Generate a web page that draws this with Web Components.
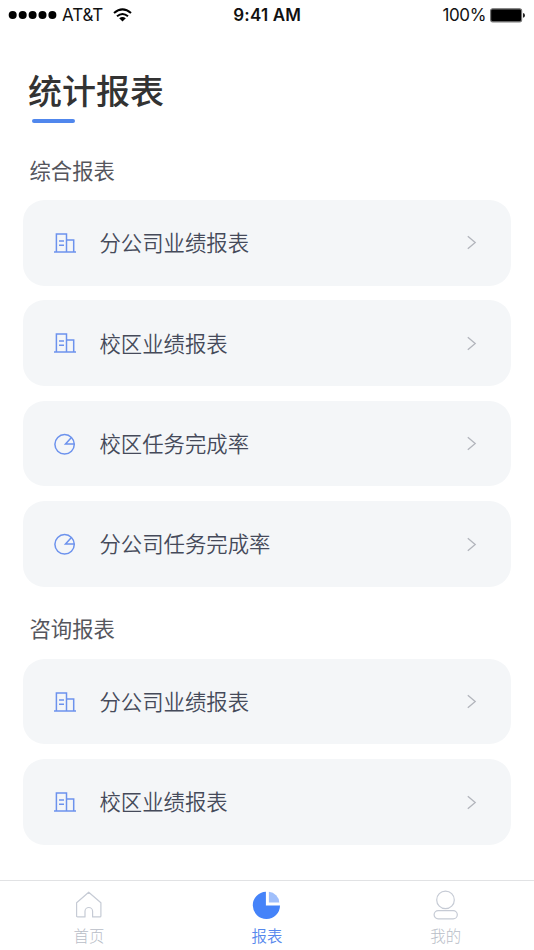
<!DOCTYPE html>
<html lang="zh-CN">
<head>
<meta charset="utf-8">
<title>统计报表</title>
<style>
html,body{margin:0;height:100%;background:#fff}
body{font-family:"Noto Sans CJK SC",sans-serif}
</style>
</head>
<body>
<report-app></report-app>
<script>
const define = (name, html) => customElements.define(name, class extends HTMLElement {
  constructor() {
    super();
    const t = document.createElement('template');
    t.innerHTML = html;
    this.attachShadow({mode: 'open'}).append(t.content.cloneNode(true));
  }
});

define('status-bar', `
<style>
:host{display:grid;grid-template-columns:1fr auto 1fr;align-items:center;height:30px;padding:0 9px 0 8px;box-sizing:border-box;font:17px/30px Inter,sans-serif;color:#111}
div{display:flex;align-items:center}
svg{display:block}
.carrier{margin-left:5px;font-size:17px;letter-spacing:-.1px}
.wifi{margin-left:9.5px}
.time{font-weight:600;font-size:17px;letter-spacing:.2px;padding-left:1.5px}
.right{justify-content:flex-end;gap:4px}
.pct{font-size:17px;letter-spacing:-.4px}
</style>
<div><svg width="49" height="10" viewBox="0 0 49 10"><circle cx="4.7" cy="5" r="4"/><circle cx="14.7" cy="5" r="4"/><circle cx="24.6" cy="5" r="4"/><circle cx="34.5" cy="5" r="4"/><circle cx="44.4" cy="5" r="4"/></svg>
<span class="carrier">AT&amp;T</span>
<svg class="wifi" width="19" height="14" viewBox="0 0 19 14" fill="none" stroke="#000" stroke-width="2"><path d="M1 5.1Q9.5-2.4 18 5.1M4 8.3q5.5-4.7 11 0"/><path d="M6.2 10.3q3.3-2.6 6.6 0L9.5 13.5z" fill="#000" stroke="none"/></svg></div>
<span class="time">9:41 AM</span>
<div class="right"><span class="pct">100%</span>
<svg width="35" height="15" viewBox="0 0 35 15"><rect x=".6" y=".8" width="31" height="13" rx="2" fill="#000" stroke="#777" stroke-width="1.2"/><path d="M33 5q2 .4 2 2.4t-2 2.4z" fill="#222"/></svg></div>`);

define('page-title', `
<style>
:host{display:block;height:93px;padding:39px 0 0 28px;box-sizing:border-box;color:#333}
h1{margin:0;font-size:34px;line-height:42px;height:50px;font-weight:500}
i{display:block;width:43px;height:4px;margin-left:4px;border-radius:2px;background:#5087ed}
</style><h1><slot></slot></h1><i></i>`);

define('report-group', `
<style>
:host{display:block}
h2{margin:0;padding-left:6.5px;font-size:21.36px;line-height:28px;font-weight:400;color:#55565d;margin-bottom:16.5px}
div{display:flex;flex-direction:column;gap:14.95px}
</style><h2><slot name="title"></slot></h2><div><slot></slot></div>`);

define('report-row', `
<style>
:host{display:flex;align-items:center;height:85.5px;border-radius:21.4px;background:#f4f6f8;color:#454a5a;font-size:21.36px;font-weight:350;line-height:32px;padding:0 34px 0 31px;box-sizing:border-box}
span{flex:1;margin-left:23.5px;padding-bottom:1.2px}
.arrow{width:11px;height:15px;fill:none;stroke:#b2b5bc;stroke-width:1.3}
</style><slot name="icon"></slot><span><slot></slot></span>
<svg class="arrow" viewBox="0 0 11 15"><path d="M1.8 1.3 9.2 7.5 1.8 13.7"/></svg>`);

const blue = 'fill="none" stroke="#6c92ed" stroke-width="1.5"';
define('building-icon', `
<style>:host{display:block;width:22px;height:22px}svg{display:block}</style>
<svg width="22" height="22" viewBox="0 0 22 22" ${blue}><path d="M0 19.9h22M2.4 20V2H12.5V20M12.5 8h7.2v12M5 8.9h5M5 13.3h5"/></svg>`);
define('ratio-icon', `
<style>:host{display:block;width:22px;height:22px}svg{display:block}</style>
<svg width="22" height="22" viewBox="0 0 22 22" ${blue}><circle cx="10.6" cy="11.3" r="9.7"/><path d="M17.4 4.4 11.5 10.9h8.7"/></svg>`);

define('home-icon', `<style>:host,svg{display:block}</style>
<svg width="30" height="30" viewBox="0 0 30 30" fill="none" stroke="#c6cbd5" stroke-width="1.2"><path d="M2.6 12.7 14.7 2.2 26.9 12.7V25.9q0 1-1 1H18.6V21.3a3.8 3.8 0 0 0-7.6 0V26.9H3.6q-1 0-1-1z" stroke-linejoin="round"/></svg>`);
define('pie-icon', `<style>:host,svg{display:block}</style>
<svg width="30" height="30" viewBox="0 0 30 30"><path d="M13.9 1.8A13.6 13.6 0 1 0 28 15.4H13.9z" fill="#4583f9"/><path d="M16.9 1.8A11.2 11.2 0 0 1 27.3 12.4H16.9z" fill="#a0bffb"/></svg>`);
define('person-icon', `<style>:host,svg{display:block}</style>
<svg width="30" height="30" viewBox="0 0 30 30" fill="none" stroke="#c6cbd5" stroke-width="1.2"><circle cx="15.5" cy="9.9" r="8.8"/><rect x="4.1" y="20.6" width="23.2" height="8.2" rx="4.1"/></svg>`);

define('tab-item', `
<style>
:host{display:flex;flex:1;flex-direction:column;align-items:center;padding-top:9px;font-size:15.4px;line-height:22px;color:#b8bdc7;font-weight:300}
:host([active]){color:#5688ed;font-weight:350}
:host(:last-child) span{padding-left:1.5px}
span{margin-top:4px}
</style><slot name="icon"></slot><span><slot></slot></span>`);
define('tab-bar', `<style>:host{display:flex;height:70px;box-sizing:border-box;border-top:1px solid #e1e2e4;background:#fff}</style><slot></slot>`);

const row = (icon, text) => `<report-row><${icon}-icon slot="icon"></${icon}-icon>${text}</report-row>`;
define('report-app', `
<style>
:host{display:flex;flex-direction:column;width:534px;height:950px;overflow:hidden;background:#fff}
main{flex:1;padding:32.5px 23px 0;display:flex;flex-direction:column;gap:27.5px}
</style>
<status-bar></status-bar><page-title>统计报表</page-title>
<main>
<report-group><span slot="title">综合报表</span>${row('building','分公司业绩报表')}${row('building','校区业绩报表')}${row('ratio','校区任务完成率')}${row('ratio','分公司任务完成率')}</report-group>
<report-group><span slot="title">咨询报表</span>${row('building','分公司业绩报表')}${row('building','校区业绩报表')}</report-group>
</main>
<tab-bar><tab-item><home-icon slot="icon"></home-icon>首页</tab-item><tab-item active><pie-icon slot="icon"></pie-icon>报表</tab-item><tab-item><person-icon slot="icon"></person-icon>我的</tab-item></tab-bar>`);
</script>
</body>
</html>
